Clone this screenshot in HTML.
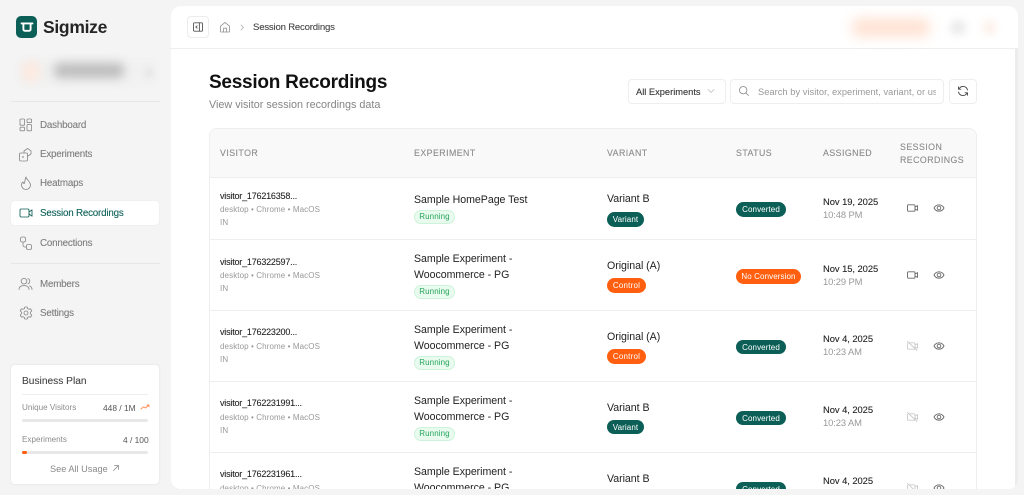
<!DOCTYPE html>
<html lang="en"><head><meta charset="utf-8"><title>Session Recordings</title>
<style>
*{box-sizing:border-box;margin:0;padding:0}
html,body{width:1024px;height:495px;overflow:hidden;background:#f4f4f4;font-family:"Liberation Sans",sans-serif}
.t{position:absolute;white-space:nowrap;line-height:14px;height:14px}
.a{position:absolute}
svg{position:absolute;fill:none;stroke-linecap:round;stroke-linejoin:round}
#main{position:absolute;left:171px;top:6px;width:847px;height:483px;background:#fff;border-radius:10px;overflow:hidden}
#main>*{margin-left:-171px;margin-top:-6px}
.nav{font-size:9.8px;color:#7d7d7d;left:40px;letter-spacing:-.2px;-webkit-text-stroke:.1px #7d7d7d}
.h{font-size:8.8px;color:#8a8a8a;letter-spacing:.45px;-webkit-text-stroke:.1px #8a8a8a}
.v{font-size:9px;color:#222;left:220px;letter-spacing:-.2px;-webkit-text-stroke:.08px #222}
.s{font-size:8px;color:#999;left:220px;letter-spacing:.1px}
.e{font-size:10.6px;color:#222;left:414px;letter-spacing:-.03px}
.p{font-size:10.6px;color:#222;left:607px;letter-spacing:-.03px}
.d{font-size:9.4px;color:#222;left:823px;letter-spacing:-.05px;-webkit-text-stroke:.1px #222}
.c{font-size:9.4px;color:#999;left:823px;letter-spacing:-.1px}
.pill{position:absolute;height:14.5px;line-height:15.5px;border-radius:7.5px;font-size:8px;text-align:center;white-space:nowrap}
.run{left:414px;width:41px;height:14px;background:#e9fbef;border:1px solid #cdf3da;color:#25a55a;line-height:12px;letter-spacing:.1px}
.var{left:607px;width:37px;background:#0b5f56;color:#fff;letter-spacing:.1px}
.ctl{left:607px;width:39px;background:#ff5f0f;color:#fff;letter-spacing:.2px}
.cv{left:736px;width:50px;background:#0b5f56;color:#fff;letter-spacing:.1px}
.nc{left:736px;width:65px;background:#ff5f0f;color:#fff;letter-spacing:.1px}
.line{position:absolute;left:210px;width:766px;height:1px;background:#eeeeee}
</style></head><body>

<!-- sidebar -->
<div class="a" style="left:16px;top:16px;width:21px;height:21.5px;background:#0b5f56;border-radius:5px"></div>
<svg style="left:16px;top:16px" width="21" height="21" viewBox="0 0 21 21"><path d="M5.5 7.4H16.5M7.4 7.4V13.4A1.4 1.4 0 0 0 8.8 14.8H13.2A1.4 1.4 0 0 0 14.6 13.4V7.4" stroke="#fff" stroke-width="1.9"/></svg>
<div class="t" style="left:43px;top:16.5px;font-size:17.5px;line-height:20px;height:20px;font-weight:700;color:#252525;letter-spacing:-.3px">Sigmize</div>

<div class="a" style="left:20px;top:60px;width:135px;height:25px;background:#f1f1f1;filter:blur(3px)"></div>
<div class="a" style="left:21px;top:60px;width:20px;height:23px;border-radius:50%;background:#fbebe2;filter:blur(4px)"></div>
<div class="a" style="left:54px;top:63px;width:70px;height:15px;border-radius:6px;background:#bdbdbd;filter:blur(5px)"></div>
<div class="a" style="left:145px;top:68px;width:8px;height:9px;background:#e6e6e6;filter:blur(3px)"></div>
<div class="a" style="left:11px;top:101px;width:149px;height:1px;background:#e6e6e6"></div>

<svg style="left:19px;top:118px" width="14" height="14" viewBox="0 0 14 14" stroke="#8a8a8a" stroke-width=".85"><rect x="1" y="1" width="4.6" height="6.2" rx="1"/><rect x="8" y="1" width="4.6" height="3.6" rx="1"/><rect x="8" y="6.6" width="4.6" height="6.2" rx="1"/><rect x="1" y="9.2" width="4.6" height="3.6" rx="1"/></svg>
<div class="t nav" style="top:119px">Dashboard</div>
<svg style="left:18px;top:147px" width="15" height="15" viewBox="0 0 15 15" stroke="#8a8a8a" stroke-width=".85"><rect x="1.5" y="6" width="8" height="8" rx="1.2"/><path d="M6 6V4L9.5 1.5 13 3.8V7L10 9"/><circle cx="5" cy="10" r=".4"/></svg>
<div class="t nav" style="top:148px">Experiments</div>
<svg style="left:19px;top:176px" width="14" height="14" viewBox="0 0 14 14" stroke="#8a8a8a" stroke-width=".85"><path d="M7 1C7.5 4 11.5 5.5 11.5 9A4.5 4.5 0 0 1 2.5 9C2.5 7.5 3.2 6.5 4 6C4.2 7 4.8 7.5 5.3 7.5C6 5.5 6 3 7 1Z"/></svg>
<div class="t nav" style="top:177px">Heatmaps</div>

<div class="a" style="left:11px;top:201px;width:148px;height:24px;background:#fff;border-radius:4px;box-shadow:0 0 2px rgba(0,0,0,.06)"></div>
<svg style="left:19px;top:206px" width="15" height="14" viewBox="0 0 15 14" stroke="#0b5f56" stroke-width=".85"><rect x="1" y="3" width="9" height="8" rx="1.2"/><path d="M10 6L13 3.8V10.2L10 8"/></svg>
<div class="t nav" style="top:207px;color:#0b5f56;-webkit-text-stroke:.1px #0b5f56">Session Recordings</div>

<svg style="left:19px;top:236px" width="14" height="15" viewBox="0 0 14 15" stroke="#8a8a8a" stroke-width=".85"><rect x="1.5" y="1" width="5" height="5" rx="1.5"/><rect x="7.5" y="8.5" width="5" height="5" rx="1.5"/><path d="M4 6V9A2 2 0 0 0 6 11H7.5"/></svg>
<div class="t nav" style="top:237px">Connections</div>
<div class="a" style="left:11px;top:263px;width:149px;height:1px;background:#e6e6e6"></div>

<svg style="left:18px;top:277px" width="15" height="14" viewBox="0 0 15 14" stroke="#8a8a8a" stroke-width=".85"><circle cx="6" cy="4.2" r="2.8"/><path d="M1 12.5C1 9.8 3 8.6 6 8.6S11 9.8 11 12.5"/><path d="M10 1.6A2.8 2.8 0 0 1 10 6.8M11.5 8.9C13 9.4 14 10.6 14 12.5"/></svg>
<div class="t nav" style="top:278px">Members</div>
<svg style="left:19px;top:306px" width="14" height="14" viewBox="0 0 14 14" stroke="#8a8a8a" stroke-width=".85"><circle cx="7" cy="7" r="2"/><path d="M5.8 1H8.2L8.6 2.6 10 3.3 11.6 2.8 12.8 4.8 11.6 6V8L12.8 9.2 11.6 11.2 10 10.7 8.6 11.4 8.2 13H5.8L5.4 11.4 4 10.7 2.4 11.2 1.2 9.2 2.4 8V6L1.2 4.8 2.4 2.8 4 3.3 5.4 2.6Z"/></svg>
<div class="t nav" style="top:307px">Settings</div>

<div class="a" style="left:11px;top:365px;width:148px;height:119px;background:#fff;border-radius:4px;box-shadow:0 0 3px rgba(0,0,0,.08)"></div>
<div class="t" style="left:22px;top:374.5px;font-size:10.2px;color:#444;letter-spacing:0;-webkit-text-stroke:.1px #444">Business Plan</div>
<div class="a" style="left:22px;top:394px;width:126px;height:1px;background:#eee"></div>
<div class="t" style="left:22px;top:400.5px;font-size:8.1px;color:#8c8c8c">Unique Visitors</div>
<div class="t" style="left:103px;top:400.5px;font-size:8.4px;color:#555">448 / 1M</div>
<svg style="left:140px;top:403px" width="10" height="8" viewBox="0 0 10 8" stroke="#ff8a50" stroke-width=".9"><path d="M1 6L3.5 3.8 5.5 5 9 2M7 2H9V3.8"/></svg>
<div class="a" style="left:22px;top:419px;width:126px;height:3px;border-radius:2px;background:#e8e8e8"></div>
<div class="t" style="left:22px;top:432.5px;font-size:8.1px;color:#8c8c8c">Experiments</div>
<div class="t" style="left:123px;top:432.5px;font-size:8.4px;color:#555">4 / 100</div>
<div class="a" style="left:22px;top:450.5px;width:126px;height:3px;border-radius:2px;background:#e8e8e8"></div>
<div class="a" style="left:22px;top:450.5px;width:5px;height:3px;border-radius:2px;background:#ff5f0f"></div>
<div class="t" style="left:50px;top:462px;font-size:9.2px;color:#8a8a8a">See All Usage</div>
<svg style="left:112px;top:464px" width="8" height="8" viewBox="0 0 8 8" stroke="#8a8a8a" stroke-width=".8"><path d="M1.5 6.5L6.5 1.5M2.5 1.5H6.5V5.5"/></svg>

<!-- main -->
<div id="main">
  <div class="a" style="left:171px;top:48px;width:847px;height:1px;background:#eeeeee"></div>
  <div class="a" style="left:1015px;top:49px;width:3px;height:440px;background:#ececec"></div>

  <div class="a" style="left:187px;top:16px;width:22px;height:22px;border:1px solid #ececec;border-radius:4px"></div>
  <svg style="left:192px;top:21px" width="12" height="12" viewBox="0 0 12 12" stroke="#555" stroke-width=".9"><rect x="1.5" y="1.8" width="9" height="8.4" rx="1"/><path d="M7.4 1.8V10.2M5.2 4.8L3.8 6 5.2 7.2"/></svg>
  <svg style="left:219px;top:21px" width="12" height="12" viewBox="0 0 12 12" stroke="#8f8f8f" stroke-width=".8"><path d="M1.5 5.2L6 1.4 10.5 5.2V10.4A.6.6 0 0 1 9.9 11H2.1A.6.6 0 0 1 1.5 10.4Z"/><path d="M4.6 11V7.2H7.4V11"/></svg>
  <svg style="left:239px;top:24px" width="6" height="7" viewBox="0 0 6 7" stroke="#b0b0b0" stroke-width=".8"><path d="M2 1L4.5 3.5 2 6"/></svg>
  <div class="t" style="left:253px;top:21px;font-size:9.6px;color:#444;letter-spacing:-.2px;-webkit-text-stroke:.1px #444">Session Recordings</div>

  <div class="a" style="left:852px;top:18px;width:78px;height:19px;border-radius:8px;background:#ffe3d4;filter:blur(6px)"></div>
  <div class="a" style="left:950px;top:20px;width:16px;height:15px;border-radius:7px;background:#ebebeb;filter:blur(4px)"></div>
  <div class="a" style="left:983px;top:20px;width:13px;height:15px;border-radius:7px;background:#fdf0ea;filter:blur(4px)"></div>

  <div class="t" style="left:209px;top:71px;height:24px;line-height:24px;font-size:19px;font-weight:700;color:#111;letter-spacing:-.25px">Session Recordings</div>
  <div class="t" style="left:209px;top:98px;font-size:10.8px;color:#858585">View visitor session recordings data</div>

  <div class="a" style="left:628px;top:79px;width:98px;height:24.5px;border:1px solid #eeeeee;border-radius:4px"></div>
  <div class="t" style="left:636px;top:85px;font-size:9.3px;color:#333;letter-spacing:0;-webkit-text-stroke:.1px #333">All Experiments</div>
  <svg style="left:707px;top:88px" width="8" height="6" viewBox="0 0 8 6" stroke="#bbb" stroke-width=".8"><path d="M1 1.5L4 4.5 7 1.5"/></svg>
  <div class="a" style="left:730px;top:79px;width:214px;height:24.5px;border:1px solid #eeeeee;border-radius:4px"></div>
  <svg style="left:738px;top:85px" width="12" height="12" viewBox="0 0 12 12" stroke="#888" stroke-width=".8"><circle cx="5.2" cy="5.2" r="3.7"/><path d="M8 8L10.5 10.5"/></svg>
  <div class="t" style="left:758px;top:85px;width:178px;overflow:hidden;font-size:9.3px;color:#999;letter-spacing:.03px">Search by visitor, experiment, variant, or user</div>
  <div class="a" style="left:949px;top:79px;width:28px;height:24.5px;border:1px solid #eeeeee;border-radius:4px"></div>
  <svg style="left:957px;top:85px" width="12" height="12" viewBox="0 0 12 12" stroke="#444" stroke-width=".9"><path d="M10.5 5A4.6 4.6 0 0 0 2.6 3L1.5 4.2M1.5 7A4.6 4.6 0 0 0 9.4 9L10.5 7.8M1.5 1.8V4.2H3.9M10.5 10.2V7.8H8.1"/></svg>

  <!-- table -->
  <div class="a" style="left:209px;top:128px;width:768px;height:380px;border:1px solid #eeeeee;border-radius:8px"></div>
  <div class="a" style="left:210px;top:129px;width:766px;height:48px;background:#f9f9f9;border-radius:7px 7px 0 0"></div>
  <div class="line" style="top:177px"></div>
  <div class="line" style="top:239px"></div>
  <div class="line" style="top:310px"></div>
  <div class="line" style="top:381px"></div>
  <div class="line" style="top:452px"></div>

  <div class="t h" style="left:220px;top:146px">VISITOR</div>
  <div class="t h" style="left:414px;top:146px">EXPERIMENT</div>
  <div class="t h" style="left:607px;top:146px">VARIANT</div>
  <div class="t h" style="left:736px;top:146px">STATUS</div>
  <div class="t h" style="left:823px;top:146px">ASSIGNED</div>
  <div class="t h" style="left:900px;top:140px">SESSION</div>
  <div class="t h" style="left:900px;top:153px">RECORDINGS</div>

  <!-- row 1 -->
  <div class="t v" style="top:189px">visitor_176216358...</div>
  <div class="t s" style="top:203px">desktop • Chrome • MacOS</div>
  <div class="t s" style="top:216px">IN</div>
  <div class="t e" style="top:193px">Sample HomePage Test</div>
  <div class="pill run" style="top:210px">Running</div>
  <div class="t p" style="top:192px">Variant B</div>
  <div class="pill var" style="top:212px">Variant</div>
  <div class="pill cv" style="top:202px">Converted</div>
  <div class="t d" style="top:195px">Nov 19, 2025</div>
  <div class="t c" style="top:208px">10:48 PM</div>
  <svg style="left:906px;top:202px" width="13" height="12" viewBox="0 0 13 12" stroke="#666" stroke-width=".9"><rect x="1.5" y="2.8" width="7.5" height="6.4" rx="1"/><path d="M9 5L11.5 3.6V8.4L9 7"/></svg>
  <svg style="left:933px;top:202px" width="12" height="12" viewBox="0 0 12 12" stroke="#666" stroke-width=".9"><path d="M1 6C2.2 3.8 4 2.8 6 2.8S9.8 3.8 11 6C9.8 8.2 8 9.2 6 9.2S2.2 8.2 1 6Z"/><circle cx="6" cy="6" r="1.8"/></svg>

  <!-- row 2 -->
  <div class="t v" style="top:255px">visitor_176322597...</div>
  <div class="t s" style="top:269px">desktop • Chrome • MacOS</div>
  <div class="t s" style="top:282px">IN</div>
  <div class="t e" style="top:252px">Sample Experiment -</div>
  <div class="t e" style="top:268px">Woocommerce - PG</div>
  <div class="pill run" style="top:285px">Running</div>
  <div class="t p" style="top:259px">Original (A)</div>
  <div class="pill ctl" style="top:278px">Control</div>
  <div class="pill nc" style="top:269px">No Conversion</div>
  <div class="t d" style="top:262px">Nov 15, 2025</div>
  <div class="t c" style="top:275px">10:29 PM</div>
  <svg style="left:906px;top:268.5px" width="13" height="12" viewBox="0 0 13 12" stroke="#666" stroke-width=".9"><rect x="1.5" y="2.8" width="7.5" height="6.4" rx="1"/><path d="M9 5L11.5 3.6V8.4L9 7"/></svg>
  <svg style="left:933px;top:268.5px" width="12" height="12" viewBox="0 0 12 12" stroke="#666" stroke-width=".9"><path d="M1 6C2.2 3.8 4 2.8 6 2.8S9.8 3.8 11 6C9.8 8.2 8 9.2 6 9.2S2.2 8.2 1 6Z"/><circle cx="6" cy="6" r="1.8"/></svg>

  <!-- row 3 -->
  <div class="t v" style="top:325px">visitor_176223200...</div>
  <div class="t s" style="top:340px">desktop • Chrome • MacOS</div>
  <div class="t s" style="top:353px">IN</div>
  <div class="t e" style="top:323px">Sample Experiment -</div>
  <div class="t e" style="top:339px">Woocommerce - PG</div>
  <div class="pill run" style="top:356px">Running</div>
  <div class="t p" style="top:330px">Original (A)</div>
  <div class="pill ctl" style="top:349px">Control</div>
  <div class="pill cv" style="top:339.5px">Converted</div>
  <div class="t d" style="top:332px">Nov 4, 2025</div>
  <div class="t c" style="top:345px">10:23 AM</div>
  <svg style="left:906px;top:339.5px" width="13" height="12" viewBox="0 0 13 12" stroke="#c9c9c9" stroke-width=".9"><path d="M3 2.8H8A1 1 0 0 1 9 3.8V8.2A1 1 0 0 1 8 9.2H2.5A1 1 0 0 1 1.5 8.2V3.5M9 5L11.5 3.6V8.4L9 7M1.5 1.5L11 10.5"/></svg>
  <svg style="left:933px;top:339.5px" width="12" height="12" viewBox="0 0 12 12" stroke="#666" stroke-width=".9"><path d="M1 6C2.2 3.8 4 2.8 6 2.8S9.8 3.8 11 6C9.8 8.2 8 9.2 6 9.2S2.2 8.2 1 6Z"/><circle cx="6" cy="6" r="1.8"/></svg>

  <!-- row 4 -->
  <div class="t v" style="top:396px">visitor_1762231991...</div>
  <div class="t s" style="top:411px">desktop • Chrome • MacOS</div>
  <div class="t s" style="top:424px">IN</div>
  <div class="t e" style="top:394px">Sample Experiment -</div>
  <div class="t e" style="top:410px">Woocommerce - PG</div>
  <div class="pill run" style="top:427px">Running</div>
  <div class="t p" style="top:401px">Variant B</div>
  <div class="pill var" style="top:419.5px">Variant</div>
  <div class="pill cv" style="top:410.5px">Converted</div>
  <div class="t d" style="top:403px">Nov 4, 2025</div>
  <div class="t c" style="top:416px">10:23 AM</div>
  <svg style="left:906px;top:410.5px" width="13" height="12" viewBox="0 0 13 12" stroke="#c9c9c9" stroke-width=".9"><path d="M3 2.8H8A1 1 0 0 1 9 3.8V8.2A1 1 0 0 1 8 9.2H2.5A1 1 0 0 1 1.5 8.2V3.5M9 5L11.5 3.6V8.4L9 7M1.5 1.5L11 10.5"/></svg>
  <svg style="left:933px;top:410.5px" width="12" height="12" viewBox="0 0 12 12" stroke="#666" stroke-width=".9"><path d="M1 6C2.2 3.8 4 2.8 6 2.8S9.8 3.8 11 6C9.8 8.2 8 9.2 6 9.2S2.2 8.2 1 6Z"/><circle cx="6" cy="6" r="1.8"/></svg>

  <!-- row 5 -->
  <div class="t v" style="top:467px">visitor_1762231961...</div>
  <div class="t s" style="top:482px">desktop • Chrome • MacOS</div>
  <div class="t e" style="top:465px">Sample Experiment -</div>
  <div class="t e" style="top:481px">Woocommerce - PG</div>
  <div class="t p" style="top:472px">Variant B</div>
  <div class="pill cv" style="top:481.5px">Converted</div>
  <div class="t d" style="top:474px">Nov 4, 2025</div>
  <svg style="left:906px;top:481.5px" width="13" height="12" viewBox="0 0 13 12" stroke="#c9c9c9" stroke-width=".9"><path d="M3 2.8H8A1 1 0 0 1 9 3.8V8.2A1 1 0 0 1 8 9.2H2.5A1 1 0 0 1 1.5 8.2V3.5M9 5L11.5 3.6V8.4L9 7M1.5 1.5L11 10.5"/></svg>
  <svg style="left:933px;top:481.5px" width="12" height="12" viewBox="0 0 12 12" stroke="#666" stroke-width=".9"><path d="M1 6C2.2 3.8 4 2.8 6 2.8S9.8 3.8 11 6C9.8 8.2 8 9.2 6 9.2S2.2 8.2 1 6Z"/><circle cx="6" cy="6" r="1.8"/></svg>
</div>
</body></html>
